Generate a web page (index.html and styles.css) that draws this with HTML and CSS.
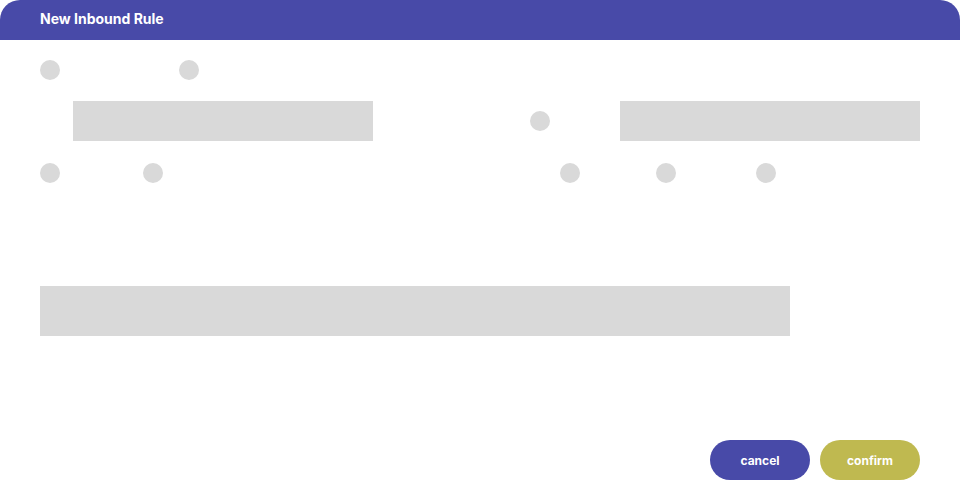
FILE: index.html
```html
<!DOCTYPE html>
<html lang="en">
<head>
<meta charset="utf-8">
<title>New Inbound Rule</title>
<link rel="stylesheet" href="styles.css">
</head>
<body>
<div class="dialog">
  <header class="dialog-header">New Inbound Rule</header>
  <main class="dialog-body">
    <div class="row row-1">
      <span class="dot"></span>
      <span class="dot gap-119"></span>
    </div>
    <div class="row row-2">
      <span class="field field-a"></span>
      <span class="dot gap-157"></span>
      <span class="field gap-70"></span>
    </div>
    <div class="row row-3">
      <span class="dot"></span>
      <span class="dot gap-83"></span>
      <span class="dot gap-397"></span>
      <span class="dot gap-76"></span>
      <span class="dot gap-80"></span>
    </div>
    <div class="row row-4">
      <span class="textarea"></span>
    </div>
  </main>
  <footer class="dialog-footer">
    <button class="btn btn-cancel">cancel</button>
    <button class="btn btn-confirm">confirm</button>
  </footer>
</div>
</body>
</html>
```
FILE: styles.css
```css
* { box-sizing: border-box; }
html, body { margin: 0; padding: 0; background: #ffffff; }
body {
  width: 960px;
  height: 500px;
  overflow: hidden;
  font-family: Inter, "Liberation Sans", sans-serif;
}
.dialog {
  width: 960px;
  height: 500px;
  display: flex;
  flex-direction: column;
}
.dialog-header {
  height: 40px;
  background: #484aa8;
  border-radius: 20px 20px 0 0;
  color: #ffffff;
  font-weight: 700;
  font-size: 14px;
  line-height: 40px;
  padding: 0 40px;
  padding-bottom: 2px;
  display: flex;
  align-items: center;
}
.dialog-body {
  padding: 0 40px;
  flex: 1;
}
.row { display: flex; align-items: center; }
.row-1 { margin-top: 20px; }
.row-2 { margin-top: 21px; }
.row-3 { margin-top: 22px; }
.row-4 { margin-top: 103px; }
.dot {
  width: 20px;
  height: 20px;
  border-radius: 50%;
  background: #d9d9d9;
  flex: none;
}
.field {
  width: 300px;
  height: 40px;
  background: #d9d9d9;
  flex: none;
}
.field-a { margin-left: 33px; }
.textarea {
  width: 750px;
  height: 50px;
  background: #d9d9d9;
}
.gap-70 { margin-left: 70px; }
.gap-76 { margin-left: 76px; }
.gap-80 { margin-left: 80px; }
.gap-83 { margin-left: 83px; }
.gap-119 { margin-left: 119px; }
.gap-157 { margin-left: 157px; }
.gap-397 { margin-left: 397px; }
.dialog-footer {
  display: flex;
  justify-content: flex-end;
  gap: 10px;
  padding: 0 40px 20px;
}
.btn {
  width: 100px;
  height: 40px;
  border: none;
  border-radius: 20px;
  color: #ffffff;
  font-family: Inter, "Liberation Sans", sans-serif;
  font-weight: 700;
  font-size: 12px;
  padding: 0;
  cursor: pointer;
}
.btn-cancel { background: #484aa8; }
.btn-confirm { background: #bfb950; }
```
